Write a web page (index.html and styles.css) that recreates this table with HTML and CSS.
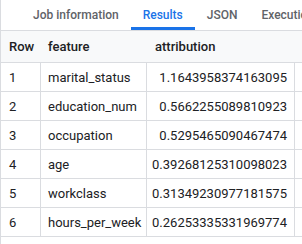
FILE: index.html
```html
<!DOCTYPE html>
<html>
<head>
<meta charset="utf-8">
<link rel="stylesheet" href="styles.css">
</head>
<body>
<div class="panel">
  <div class="tabs">
    <div class="tab">Job information</div>
    <div class="tab active">Results</div>
    <div class="tab">JSON</div>
    <div class="tab">Execution details</div>
  </div>
  <table class="grid">
    <colgroup>
      <col class="c-row"><col class="c-feat"><col class="c-attr"><col class="c-rest">
    </colgroup>
    <thead>
      <tr><th class="num">Row</th><th>feature</th><th>attribution</th><th></th></tr>
    </thead>
    <tbody>
      <tr><td>1</td><td>marital_status</td><td class="val">1.1643958374163095</td><td></td></tr>
      <tr><td>2</td><td>education_num</td><td class="val">0.5662255089810923</td><td></td></tr>
      <tr><td>3</td><td>occupation</td><td class="val">0.5295465090467474</td><td></td></tr>
      <tr><td>4</td><td>age</td><td class="val">0.39268125310098023</td><td></td></tr>
      <tr><td>5</td><td>workclass</td><td class="val">0.31349230977181575</td><td></td></tr>
      <tr><td>6</td><td>hours_per_week</td><td class="val">0.26253335331969774</td><td></td></tr>
    </tbody>
  </table>
</div>
</body>
</html>
```
FILE: styles.css
```css
html, body {
  margin: 0;
  padding: 0;
  background: #fff;
}
body {
  font-family: Roboto, "Liberation Sans", sans-serif;
  font-size: 13px;
  color: #202124;
  overflow: hidden;
}
.panel {
  border-left: 1px solid #dadce0;
  min-height: 244px;
  box-sizing: border-box;
}
.tabs {
  display: flex;
  height: 30px;
  border-bottom: 1px solid #dadce0;
  padding-left: 20px;
  white-space: nowrap;
  overflow: hidden;
}
.tab {
  padding: 0 12px;
  line-height: 30px;
  font-size: 12px;
  color: #5f6368;
  font-weight: 500;
  box-sizing: border-box;
  height: 30px;
  flex: none;
}
.tab.active {
  color: #1a73e8;
  box-shadow: inset 0 -3px 0 #1a73e8;
}
.grid {
  border-collapse: separate;
  border-spacing: 0;
  table-layout: fixed;
  width: 301px;
}
.c-row { width: 40px; }
.c-feat { width: 106px; }
.c-attr { width: 148px; }
.c-rest { width: 7px; }
th, td {
  box-sizing: border-box;
  padding: 0 7px;
  text-align: left;
  white-space: nowrap;
  overflow: hidden;
  border-bottom: 1px solid #dadce0;
}
th {
  height: 32px;
  background: #f8f9fa;
  font-weight: 500;
  color: #202124;
}
th.num { padding-left: 8px; }
td {
  height: 29px;
  border-right: 1px solid #dadce0;
}
td:first-child { padding-left: 8px; }
td:last-child { border-right: none; }
td.val {
  text-align: right;
  padding: 0 7px 0 4px;
}
th:nth-child(3) { padding-left: 8px; }
```
